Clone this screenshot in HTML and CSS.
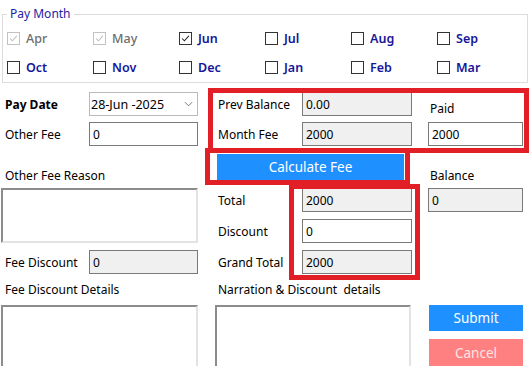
FILE: index.html
```html
<!DOCTYPE html>
<html lang="en">
<head>
    <meta charset="UTF-8">
    <meta name="viewport" content="width=device-width, initial-scale=1.0">
    <title>Fee Collection</title>
    <link rel="stylesheet" href="styles.css">
</head>
<body>
<div class="window">

    <!-- Pay Month -->
    <fieldset class="pay-month">
        <legend>Pay Month</legend>
        <div class="months">
            <label class="month disabled"><span class="box checked"><svg viewBox="0 0 13 13"><path d="M2.5 6.5 L5.2 9.2 L10.5 3.5"/></svg></span>Apr</label>
            <label class="month disabled"><span class="box checked"><svg viewBox="0 0 13 13"><path d="M2.5 6.5 L5.2 9.2 L10.5 3.5"/></svg></span>May</label>
            <label class="month"><span class="box checked"><svg viewBox="0 0 13 13"><path d="M2.5 6.5 L5.2 9.2 L10.5 3.5"/></svg></span>Jun</label>
            <label class="month"><span class="box"></span>Jul</label>
            <label class="month"><span class="box"></span>Aug</label>
            <label class="month"><span class="box"></span>Sep</label>
            <label class="month"><span class="box"></span>Oct</label>
            <label class="month"><span class="box"></span>Nov</label>
            <label class="month"><span class="box"></span>Dec</label>
            <label class="month"><span class="box"></span>Jan</label>
            <label class="month"><span class="box"></span>Feb</label>
            <label class="month"><span class="box"></span>Mar</label>
        </div>
    </fieldset>

    <!-- Fee form -->
    <div class="form-grid">
        <div class="lbl left bold r1">Pay Date</div>
        <div class="datepick r1">
            <span>28-Jun -2025</span>
            <svg viewBox="0 0 10 6"><path d="M1 1 L5 5 L9 1"/></svg>
        </div>
        <div class="lbl mid r1">Prev Balance</div>
        <div class="field ro mid-in r1">0.00</div>
        <div class="lbl right paid-lbl r1">Paid</div>

        <div class="lbl left r2">Other Fee</div>
        <div class="field left-in r2">0</div>
        <div class="lbl mid r2">Month Fee</div>
        <div class="field ro mid-in r2">2000</div>
        <div class="field right-in r2">2000</div>

        <div class="lbl left wide end r3">Other Fee Reason</div>
        <button class="btn calc r3">Calculate Fee</button>
        <div class="lbl right end r3">Balance</div>

        <div class="memo left-memo"></div>
        <div class="lbl mid r4">Total</div>
        <div class="field ro mid-in r4">2000</div>
        <div class="field ro right-in r4">0</div>

        <div class="lbl mid r5">Discount</div>
        <div class="field mid-in r5">0</div>

        <div class="lbl left r6">Fee Discount</div>
        <div class="field ro left-in r6">0</div>
        <div class="lbl mid r6">Grand Total</div>
        <div class="field ro mid-in r6">2000</div>

        <div class="cap left r7">Fee Discount Details</div>
        <div class="cap mid r7">Narration &amp; Discount &nbsp;details</div>

        <div class="memo left-memo2 r8"></div>
        <div class="memo mid-memo r8"></div>
        <div class="actions r8">
            <button class="btn submit">Submit</button>
            <button class="btn cancel">Cancel</button>
        </div>
    </div>

    <!-- highlight marks -->
    <div class="mark mark-fees"></div>
    <div class="mark mark-calc"></div>
    <div class="mark mark-total"></div>
</div>
</body>
</html>
```

FILE: styles.css
```css
body {
    margin: 0;
    background-color: #fff;
    font-family: "Noto Sans", "Open Sans", sans-serif;
    font-size: 12px;
    color: #000;
    overflow: hidden;
}
.window {
    position: relative;
    width: 530px;
    height: 366px;
    overflow: hidden;
}

/* Pay Month group */
.pay-month {
    margin: 5px 0 0 2px;
    width: 521px;
    box-sizing: border-box;
    height: 78px;
    padding: 0 4px;
    border: 1px solid #dcdcdc;
}
.pay-month legend {
    padding: 0 3px;
    line-height: 18px;
    color: #2323a3;
}
.months {
    display: grid;
    grid-template-columns: repeat(6, 86px);
    grid-auto-rows: 29px;
    padding-top: 1px;
}
.month {
    display: flex;
    align-items: center;
    gap: 6px;
    font-size: 12.5px;
    font-weight: 600;
    color: #16169a;
}
.month.disabled {
    color: #6d6d6d;
    font-weight: 500;
}
.box {
    width: 13px;
    height: 13px;
    box-sizing: border-box;
    border: 1px solid #333;
    background-color: #fff;
    display: flex;
}
.box svg {
    width: 11px;
    height: 11px;
}
.box path {
    fill: none;
    stroke: #222;
    stroke-width: 1.2;
}
.disabled .box {
    border-color: #c2c2c2;
}
.disabled .box path {
    stroke: #bdbdbd;
}

/* form grid */
.form-grid {
    display: grid;
    margin: 9px 0 0 1px;
    grid-template-columns: 88px 109px 17px 87px 110px 16px 95px;
    grid-template-rows: 30px 30px 36px 31px 31px 31px 24px 70px;
}
.r1 { grid-row: 1; }
.r2 { grid-row: 2; }
.r3 { grid-row: 3; }
.r4 { grid-row: 4; }
.r5 { grid-row: 5; }
.r6 { grid-row: 6; }
.r7 { grid-row: 7; }
.r8 { grid-row: 8; }

.lbl {
    height: 24px;
    display: flex;
    align-items: center;
    white-space: nowrap;
    align-self: start;
}
.lbl.end {
    align-self: end;
    height: 22px;
    margin-bottom: 2px;
}
.left { grid-column: 1; padding-left: 4px; }
.left.wide { grid-column: 1 / 3; }
.mid { grid-column: 4; padding-left: 3px; }
.right { grid-column: 7; padding-left: 2px; }
.bold { font-weight: 700; }
.paid-lbl { margin-top: 4px; }

.cap {
    line-height: 18px;
    white-space: nowrap;
}
.cap.mid { grid-column: 4 / 6; }

.field {
    height: 24px;
    box-sizing: border-box;
    border: 1px solid #7a7a7a;
    background-color: #fff;
    padding: 0 3px;
    display: flex;
    align-items: center;
    align-self: start;
}
.field.ro {
    background-color: #f0f0f0;
}
.left-in { grid-column: 2; }
.mid-in { grid-column: 5; }
.right-in { grid-column: 7; }

.datepick {
    grid-column: 2;
    height: 24px;
    box-sizing: border-box;
    border: 1px solid #bababa;
    display: flex;
    align-items: center;
    justify-content: space-between;
    padding: 0 4px 0 1px;
    font-size: 12.5px;
}
.datepick svg {
    width: 9px;
    height: 6px;
}
.datepick path {
    fill: none;
    stroke: #6a6a6a;
    stroke-width: 1;
}

.memo {
    box-sizing: border-box;
    border: 2px solid;
    border-color: #8c8c8c #e3e3e3 #e3e3e3 #8c8c8c;
    background-color: #fff;
}
.left-memo {
    grid-column: 1 / 3;
    grid-row: 4 / 6;
    height: 55px;
}
.left-memo2 {
    grid-column: 1 / 3;
    height: 70px;
}
.mid-memo {
    grid-column: 4 / 6;
    margin-right: 1px;
    height: 70px;
}

.btn {
    border: none;
    font-family: inherit;
    font-size: 13.5px;
    color: #fff;
    padding: 0;
    cursor: pointer;
}
.calc {
    grid-column: 4 / 6;
    margin: 2px 8px 0 2px;
    height: 26px;
    background-color: #1e90ff;
}
.actions {
    grid-column: 7;
    display: flex;
    flex-direction: column;
    gap: 8px;
    padding-left: 1px;
}
.submit {
    height: 26px;
    background-color: #1e90ff;
}
.cancel {
    height: 27px;
    background-color: #ff8080;
    color: #fde6e6;
}

/* red highlight rectangles drawn over the form */
.mark {
    position: absolute;
    border: 5px solid #e21f26;
    box-sizing: border-box;
}
.mark-fees {
    left: 208px;
    top: 88px;
    width: 321px;
    height: 65px;
}
.mark-calc {
    left: 205px;
    top: 148px;
    width: 205px;
    height: 37px;
}
.mark-total {
    left: 289px;
    top: 184px;
    width: 131px;
    height: 96px;
}
```
